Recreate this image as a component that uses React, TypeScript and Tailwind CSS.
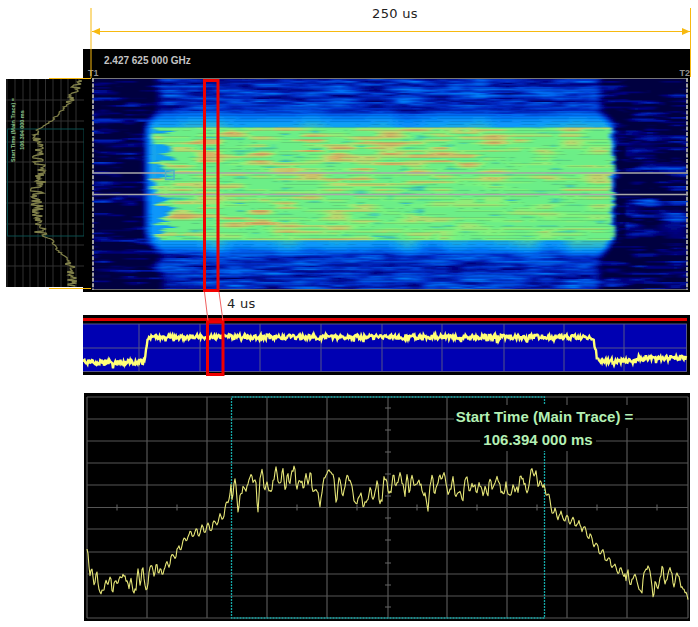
const hash = (x: number, y: number) => {
  const s = Math.sin(x * 127.1 + y * 311.7) * 43758.5453
  return s - Math.floor(s)
}

const smooth = (a: number, b: number, v: number) => {
  const t = Math.min(1, Math.max(0, (v - a) / (b - a)))
  return t * t * (3 - 2 * t)
}

const mix = (a: number, b: number, t: number) => a + (b - a) * t

function vnoise(x: number, y: number) {
  const ix = Math.floor(x)
  const iy = Math.floor(y)
  const fx = smooth(0, 1, x - ix)
  const fy = smooth(0, 1, y - iy)
  return mix(
    mix(hash(ix, iy), hash(ix + 1, iy), fx),
    mix(hash(ix, iy + 1), hash(ix + 1, iy + 1), fx),
    fy,
  )
}

// jet-like palette of the spectrogram, stops as [t, r, g, b]
const STOPS = [
  [0, 0, 0, 38],
  [0.14, 0, 0, 125],
  [0.28, 0, 45, 200],
  [0.42, 0, 110, 245],
  [0.52, 10, 155, 250],
  [0.62, 55, 190, 195],
  [0.72, 100, 235, 140],
  [0.8, 125, 245, 125],
  [0.9, 190, 215, 110],
  [1, 215, 175, 100],
]

const BUCKETS = 48

function colour(i: number) {
  const t = i / (BUCKETS - 1)
  let k = 0
  while (k < STOPS.length - 2 && STOPS[k + 1][0] < t) k++
  const a = STOPS[k]
  const b = STOPS[k + 1]
  const f = (t - a[0]) / (b[0] - a[0])
  const c = [1, 2, 3].map((n) => Math.round(mix(a[n], b[n], f)))
  return `rgb(${c[0]},${c[1]},${c[2]})`
}

function heat(x: number, y: number) {
  const n = vnoise(x / 34, y / 2.4)
  const n2 = vnoise(x / 13 + 50, y / 1.3 + 20)
  const streak = (n * 0.62 + n2 * 0.38 - 0.5) * 2.4

  // noise floor, left and right of the burst
  const rightBoost = x > 625 && x < 685 && ((y > 130 && y < 172) || (y > 200 && y < 238)) ? 0.09 : 0
  const bg = 0.035 + Math.max(0, streak) * 0.28 + rightBoost * Math.max(0, vnoise(x / 25, y / 5.5) - 0.35) * 4

  const outerL = 152 + vnoise(2, y / 14) * 12
  const mx = smooth(outerL - 8, outerL + 8, x) * (1 - smooth(592, 606, x))
  let t = mix(bg, 0.28 + streak * 0.18, mx)

  // glow round the burst, with the scalloped top and bottom edge
  const side = y < 180 ? 7 : 31
  const blob = vnoise(x / 24 + side, 3.5)
  const blob2 = vnoise(x / 24 + side + 9, 6.5)
  const top = 106 + (1 - blob) * 8
  const bottom = 261 - (1 - blob2) * 11
  const r = 22
  const qx = Math.max(144 + r - x, x - (614 - r), 0)
  const qy = Math.max(top + r - y, y - (bottom - r), 0)
  const d = Math.hypot(qx, qy) - r
  const g = 1 - smooth(-9, 4, d)
  const near = 1 - smooth(0, 22, y < 128 ? 128 - y : y > 240 ? y - 240 : 0)
  const b = y < 180 ? blob : blob2
  t = mix(t, 0.36 + near * 0.13 + b * b * near * 0.2, g)

  // body of the burst
  const fingerL = 148 + vnoise(6, y / 2.8) * 30
  const fingerR = 608 + vnoise(16, y / 2.8) * 7
  const bx = smooth(fingerL - 3, fingerL + 5, x) * (1 - smooth(fingerR - 2, fingerR + 3, x))
  const by = smooth(127, 128.5, y) * (1 - smooth(239.5, 241, y))
  const region = 0.35 + vnoise(x / 120 + 2, y / 24 + 1) * 1.2
  const warm = Math.max(0, vnoise(x / 26 + 3, y / 2.6) - 0.38) * 0.38 * region
  const dip = Math.max(0, 0.36 - vnoise(x / 15 + 9, y / 1.5 + 5)) * 0.42
  const band = 0.75 + warm - dip
  t = mix(t, band, bx * by)
  return Math.min(1, Math.max(0, t))
}

// one path per palette colour, the cells are merged by the blur filter
const CELL_W = 3
const CELL_H = 1.5
const heatPaths = (() => {
  const d: string[] = Array.from({ length: BUCKETS }, () => "")
  for (let y = 78; y < 290; y += CELL_H) {
    for (let x = 92; x < 688; x += CELL_W) {
      const i = Math.round(heat(x + 1.5, y + 0.75) * (BUCKETS - 1))
      d[i] += `M${x} ${y}h${CELL_W + 0.4}v${CELL_H + 0.3}h-${CELL_W + 0.4}z`
    }
  }
  return d
})()

function envelope(pts: number[][], v: number) {
  for (let i = 0; i < pts.length - 1; i++) {
    if (v <= pts[i + 1][0]) {
      return mix(pts[i][1], pts[i + 1][1], (v - pts[i][0]) / (pts[i + 1][0] - pts[i][0]))
    }
  }
  return pts[pts.length - 1][1]
}

const SCOPE_ENV = [
  [87, 556], [92, 580], [130, 582], [160, 574], [177, 552], [187, 536], [213, 526], [225, 512],
  [231, 488], [255, 484], [270, 480], [300, 480], [340, 484], [365, 497], [395, 484], [440, 483],
  [470, 490], [500, 486], [540, 478], [546, 490], [553, 512], [583, 527], [597, 547], [617, 570],
  [643, 580], [663, 578], [688, 590],
]

// the deep notches of the lower trace, [x, depth]
const SCOPE_SPIKES = [
  [238, 24], [258, 24], [320, 14], [337, 14], [368, 16], [428, 18], [463, 12], [477, 12], [518, 20], [527, 20], [653, 12],
]

const scopeTrace = (() => {
  const p: string[] = []
  for (let x = 87; x <= 688; x += 1) {
    const e = envelope(SCOPE_ENV, x)
    const flat = x > 231 && x < 544
    const edge = x < 160 || x > 625
    const n = (vnoise(x / 2.3, 4) - 0.5) * 2
    const r = hash(x, 4) - 0.5
    let y = e
    if (flat || edge) y += n * 13 + r * 4
    else y += Math.sin(x * 1.05) * 4 + r * 3
    for (const [sx, depth] of SCOPE_SPIKES) {
      y += depth * Math.exp(-(((x - sx) / 1.4) ** 2))
    }
    p.push(`${x},${y.toFixed(1)}`)
  }
  return p.join(" ")
})()

const SIDE_ENV = [
  [79, 78], [90, 75], [100, 70], [113, 60], [122, 50], [129, 38], [136, 37], [160, 39], [175, 42],
  [190, 37], [215, 37], [235, 41], [240, 52], [250, 57], [260, 68], [270, 72], [286, 72],
]

const sideTrace = (() => {
  const p: string[] = []
  for (let y = 80; y <= 286; y += 1) {
    const flat = y > 134 && y < 236
    const end = y > 262 || y < 105
    const amp = flat ? 13 : end ? 10 : 3
    p.push(`${(envelope(SIDE_ENV, y) + (hash(y, 21) - 0.5) * amp).toFixed(1)},${y}`)
  }
  return p.join(" ")
})()

const stripTrace = (() => {
  const p: string[] = []
  for (let x = 83; x <= 686; x += 0.75) {
    let base = 337
    if (x < 144) base = 362
    else if (x < 148) base = mix(362, 337, (x - 144) / 4)
    else if (x > 593 && x < 598) base = mix(337, 361, (x - 593) / 5)
    else if (x >= 598 && x < 636) base = 361
    else if (x >= 636) base = 358
    const spike = hash(x, 31) > 0.96 ? 4 : 0
    p.push(`${x},${(base + (hash(x, 33) - 0.5) * 5 + spike).toFixed(1)}`)
  }
  return p.join(" ")
})()

const SCOPE_H = [397, 419, 441, 463, 485, 507.5, 529, 552, 574, 596, 618]
const SCOPE_V = [87, 147, 207, 267, 327, 388, 447, 507, 567, 627, 688]
const SCOPE_X_TICKS = [117, 177, 297, 357, 417, 477, 537, 597, 657]
const SCOPE_Y_TICKS = [408, 430, 452, 474, 496, 518, 540, 563, 585, 607]
const SIDE_V = [7, 15, 23, 30, 38, 45.5, 53, 61, 68, 76]
const SIDE_H = [100, 121, 142, 162, 182, 203, 224, 245, 266]
const STRIP_V = [139, 200, 260, 321, 382, 442, 504, 564, 624]

function SidePlot() {
  return (
    <svg viewBox="6 79 78 208" className="relative z-10 mt-[30px] block h-[208px] w-[78px] shrink-0 bg-black">
      <g stroke="#303030" strokeWidth="1">
        {SIDE_V.map((x) => (
          <line key={x} x1={x} x2={x} y1="79" y2="287" />
        ))}
        {SIDE_H.map((y) => (
          <line key={y} x1="6" x2="84" y1={y} y2={y} />
        ))}
      </g>
      <rect x="7.5" y="129" width="76.5" height="107" fill="none" stroke="#0b4f4f" strokeWidth="1" />
      <polyline points={sideTrace} fill="none" stroke="#80804a" strokeWidth="1.3" />
      <g fill="#8cc48c" fontSize="5.4" fontWeight="700" textAnchor="middle" className="font-['Liberation_Sans',sans-serif]">
        <text transform="translate(15 130) rotate(-90)">Start Time (Main Trace) =</text>
        <text transform="translate(24 130) rotate(-90)">106.394 000 ms</text>
      </g>
    </svg>
  )
}

function Spectrogram() {
  return (
    <svg viewBox="92 78 596 212" className="block h-[212px] w-[596px]">
      <defs>
        <filter id="soft" x="-2%" y="-2%" width="104%" height="104%">
          <feGaussianBlur stdDeviation="1.6 0.45" />
        </filter>
      </defs>
      <rect x="92" y="78" width="596" height="212" fill="#000026" />
      <g filter="url(#soft)">
        {heatPaths.map((d, i) => (d ? <path key={i} d={d} fill={colour(i)} /> : null))}
      </g>
      <g fill="none" stroke="#a9a9a9">
        <line x1="93" x2="688" y1="173" y2="173" strokeWidth="1.4" />
        <line x1="93" x2="688" y1="194.5" y2="194.5" strokeWidth="1.4" />
        <rect x="165.5" y="170.5" width="8.5" height="9" stroke="#50b0c8" strokeWidth="1.4" fill="#30c8c8" fillOpacity="0.25" />
        <line x1="92" x2="688" y1="78.5" y2="78.5" stroke="#777" strokeWidth="1" />
        <line x1="92" x2="688" y1="289.5" y2="289.5" stroke="#6a6a6a" strokeWidth="1" />
        <line x1="93" x2="93" y1="78" y2="290" stroke="#a0a0a0" strokeWidth="2" strokeDasharray="4 1.4" />
        <line x1="687" x2="687" y1="78" y2="290" stroke="#a0a0a0" strokeWidth="2" strokeDasharray="4 1.4" />
      </g>
    </svg>
  )
}

function StripPlot() {
  return (
    <svg viewBox="83 315 607 60" className="block h-[60px] w-[607px]">
      <rect x="83" y="315" width="607" height="60" fill="#000" />
      <rect x="83" y="318" width="604" height="3" fill="#e00000" />
      <rect x="83" y="324" width="604" height="47.5" fill="#0000b2" />
      <g stroke="#545488" strokeWidth="1">
        <line x1="83" x2="687" y1="324" y2="324" />
        <line x1="83" x2="687" y1="348" y2="348" />
        <line x1="83" x2="687" y1="371.5" y2="371.5" />
        <line x1="686.5" x2="686.5" y1="324" y2="372" />
        {STRIP_V.map((x) => (
          <line key={x} x1={x} x2={x} y1="324" y2="372" />
        ))}
      </g>
      <polyline points={stripTrace} fill="none" stroke="#ffff78" strokeWidth="2.4" />
    </svg>
  )
}

function ScopePlot() {
  return (
    <svg viewBox="84 393 606 228" className="block h-[228px] w-[606px]">
      <g stroke="#565656" strokeWidth="1.2">
        {SCOPE_H.map((y) => (
          <line key={y} x1="87" x2="688" y1={y} y2={y} />
        ))}
        {SCOPE_V.map((x) => (
          <line key={x} x1={x} x2={x} y1="397" y2="618" />
        ))}
      </g>
      <g stroke="#666" strokeWidth="1">
        {SCOPE_X_TICKS.map((x) => (
          <line key={x} x1={x} x2={x} y1="504.5" y2="510.5" />
        ))}
        {SCOPE_Y_TICKS.map((y) => (
          <line key={y} x1="385" x2="391" y1={y} y2={y} />
        ))}
      </g>
      <rect x="231.5" y="397" width="313" height="221" fill="none" stroke="#14a8a8" strokeWidth="1.3" strokeDasharray="2 1" />
      <polyline points={scopeTrace} fill="none" stroke="#e6e678" strokeWidth="1.1" strokeLinejoin="round" />
    </svg>
  )
}

export default function App() {
  return (
    <div className="relative h-[627px] w-[698px] overflow-hidden bg-white font-['DejaVu_Sans',sans-serif]">
      <div className="flex h-[49px] justify-center pl-[92px] pt-[4px] text-[13px] leading-[19px] tracking-[0.3px] text-[#222]">
        250 us
      </div>

      <div className="flex h-[243px] pl-[6px]">
        <SidePlot />
        <div className="-ml-px flex w-[607px] flex-col bg-black">
          <div className="relative h-[29px] shrink-0 font-['Liberation_Sans',sans-serif] font-bold text-[#c4c4c4]">
            <span className="absolute left-[21px] top-[6px] text-[10px] leading-[12px]">2.427 625 000 GHz</span>
            <span className="absolute bottom-0 left-[5px] text-[9px] leading-[10px] text-[#909090]">T1</span>
            <span className="absolute bottom-0 right-0 text-[9px] leading-[10px] text-[#909090]">T2</span>
          </div>
          <div className="pl-[9px]">
            <Spectrogram />
          </div>
        </div>
      </div>

      <div className="h-[23px] pl-[227px] pt-[2px] text-[13px] leading-[19px] tracking-[0.3px] text-[#222]">4 us</div>

      <div className="pl-[83px]">
        <StripPlot />
      </div>

      <div className="relative ml-[84px] mt-[18px] h-[228px] w-[606px] bg-black">
        <ScopePlot />
        <div className="absolute left-[367px] top-[12px] flex w-[187px] flex-col items-center font-['Liberation_Sans',sans-serif] text-[15px] font-bold leading-[23px] text-[#b4f0b4]">
          <span className="bg-black px-[2px]">Start Time (Main Trace) =</span>
          <span className="mr-[13px] bg-black px-[3px]">106.394 000 ms</span>
        </div>
      </div>

      {/* annotations drawn over the plots */}
      <svg viewBox="0 0 698 627" className="pointer-events-none absolute inset-0 z-20 h-[627px] w-[698px]">
        <g stroke="#f7b90f" strokeWidth="1" fill="#f7b90f">
          <line x1="91" x2="91" y1="8" y2="78" />
          <line x1="690.5" x2="690.5" y1="8" y2="77" />
          <line x1="92" x2="690" y1="31.5" y2="31.5" />
          <line x1="49" x2="91" y1="78.5" y2="78.5" />
          <line x1="49" x2="91" y1="288.5" y2="288.5" />
          <path d="M92 31.5 L100 28 L100 35 Z" stroke="none" />
          <path d="M690 31.5 L682 28 L682 35 Z" stroke="none" />
        </g>
        <g stroke="#f06060" strokeWidth="1">
          <line x1="204.5" x2="208" y1="292" y2="321" />
          <line x1="219" x2="223" y1="292" y2="321" />
        </g>
        <g fill="none" stroke="#f00000" strokeWidth="3">
          <rect x="204.5" y="80.5" width="13.5" height="210" />
          <rect x="207.5" y="322" width="15.5" height="52.5" />
        </g>
      </svg>
    </div>
  )
}
